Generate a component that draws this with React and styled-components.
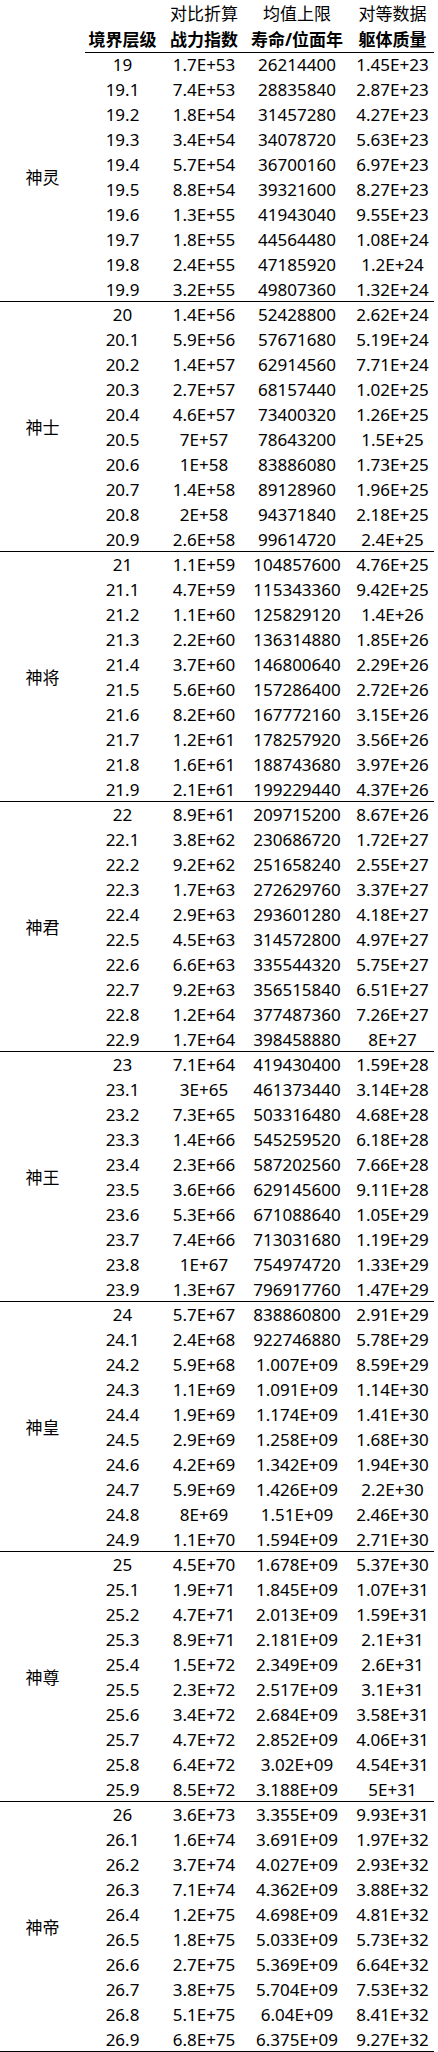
import React from "react";
import styled, { createGlobalStyle } from "styled-components";

const GlobalStyle = createGlobalStyle`
  html, body {
    margin: 0;
    padding: 0;
    background: #fff;
  }
  body {
    font-family: "Noto Sans", "Noto Sans CJK SC", sans-serif;
    color: #000;
    overflow: hidden;
  }
`;

const groups = [
  {
    name: "神灵",
    rows: [
      ["19", "1.7E+53", "26214400", "1.45E+23"],
      ["19.1", "7.4E+53", "28835840", "2.87E+23"],
      ["19.2", "1.8E+54", "31457280", "4.27E+23"],
      ["19.3", "3.4E+54", "34078720", "5.63E+23"],
      ["19.4", "5.7E+54", "36700160", "6.97E+23"],
      ["19.5", "8.8E+54", "39321600", "8.27E+23"],
      ["19.6", "1.3E+55", "41943040", "9.55E+23"],
      ["19.7", "1.8E+55", "44564480", "1.08E+24"],
      ["19.8", "2.4E+55", "47185920", "1.2E+24"],
      ["19.9", "3.2E+55", "49807360", "1.32E+24"],
    ],
  },
  {
    name: "神士",
    rows: [
      ["20", "1.4E+56", "52428800", "2.62E+24"],
      ["20.1", "5.9E+56", "57671680", "5.19E+24"],
      ["20.2", "1.4E+57", "62914560", "7.71E+24"],
      ["20.3", "2.7E+57", "68157440", "1.02E+25"],
      ["20.4", "4.6E+57", "73400320", "1.26E+25"],
      ["20.5", "7E+57", "78643200", "1.5E+25"],
      ["20.6", "1E+58", "83886080", "1.73E+25"],
      ["20.7", "1.4E+58", "89128960", "1.96E+25"],
      ["20.8", "2E+58", "94371840", "2.18E+25"],
      ["20.9", "2.6E+58", "99614720", "2.4E+25"],
    ],
  },
  {
    name: "神将",
    rows: [
      ["21", "1.1E+59", "104857600", "4.76E+25"],
      ["21.1", "4.7E+59", "115343360", "9.42E+25"],
      ["21.2", "1.1E+60", "125829120", "1.4E+26"],
      ["21.3", "2.2E+60", "136314880", "1.85E+26"],
      ["21.4", "3.7E+60", "146800640", "2.29E+26"],
      ["21.5", "5.6E+60", "157286400", "2.72E+26"],
      ["21.6", "8.2E+60", "167772160", "3.15E+26"],
      ["21.7", "1.2E+61", "178257920", "3.56E+26"],
      ["21.8", "1.6E+61", "188743680", "3.97E+26"],
      ["21.9", "2.1E+61", "199229440", "4.37E+26"],
    ],
  },
  {
    name: "神君",
    rows: [
      ["22", "8.9E+61", "209715200", "8.67E+26"],
      ["22.1", "3.8E+62", "230686720", "1.72E+27"],
      ["22.2", "9.2E+62", "251658240", "2.55E+27"],
      ["22.3", "1.7E+63", "272629760", "3.37E+27"],
      ["22.4", "2.9E+63", "293601280", "4.18E+27"],
      ["22.5", "4.5E+63", "314572800", "4.97E+27"],
      ["22.6", "6.6E+63", "335544320", "5.75E+27"],
      ["22.7", "9.2E+63", "356515840", "6.51E+27"],
      ["22.8", "1.2E+64", "377487360", "7.26E+27"],
      ["22.9", "1.7E+64", "398458880", "8E+27"],
    ],
  },
  {
    name: "神王",
    rows: [
      ["23", "7.1E+64", "419430400", "1.59E+28"],
      ["23.1", "3E+65", "461373440", "3.14E+28"],
      ["23.2", "7.3E+65", "503316480", "4.68E+28"],
      ["23.3", "1.4E+66", "545259520", "6.18E+28"],
      ["23.4", "2.3E+66", "587202560", "7.66E+28"],
      ["23.5", "3.6E+66", "629145600", "9.11E+28"],
      ["23.6", "5.3E+66", "671088640", "1.05E+29"],
      ["23.7", "7.4E+66", "713031680", "1.19E+29"],
      ["23.8", "1E+67", "754974720", "1.33E+29"],
      ["23.9", "1.3E+67", "796917760", "1.47E+29"],
    ],
  },
  {
    name: "神皇",
    rows: [
      ["24", "5.7E+67", "838860800", "2.91E+29"],
      ["24.1", "2.4E+68", "922746880", "5.78E+29"],
      ["24.2", "5.9E+68", "1.007E+09", "8.59E+29"],
      ["24.3", "1.1E+69", "1.091E+09", "1.14E+30"],
      ["24.4", "1.9E+69", "1.174E+09", "1.41E+30"],
      ["24.5", "2.9E+69", "1.258E+09", "1.68E+30"],
      ["24.6", "4.2E+69", "1.342E+09", "1.94E+30"],
      ["24.7", "5.9E+69", "1.426E+09", "2.2E+30"],
      ["24.8", "8E+69", "1.51E+09", "2.46E+30"],
      ["24.9", "1.1E+70", "1.594E+09", "2.71E+30"],
    ],
  },
  {
    name: "神尊",
    rows: [
      ["25", "4.5E+70", "1.678E+09", "5.37E+30"],
      ["25.1", "1.9E+71", "1.845E+09", "1.07E+31"],
      ["25.2", "4.7E+71", "2.013E+09", "1.59E+31"],
      ["25.3", "8.9E+71", "2.181E+09", "2.1E+31"],
      ["25.4", "1.5E+72", "2.349E+09", "2.6E+31"],
      ["25.5", "2.3E+72", "2.517E+09", "3.1E+31"],
      ["25.6", "3.4E+72", "2.684E+09", "3.58E+31"],
      ["25.7", "4.7E+72", "2.852E+09", "4.06E+31"],
      ["25.8", "6.4E+72", "3.02E+09", "4.54E+31"],
      ["25.9", "8.5E+72", "3.188E+09", "5E+31"],
    ],
  },
  {
    name: "神帝",
    rows: [
      ["26", "3.6E+73", "3.355E+09", "9.93E+31"],
      ["26.1", "1.6E+74", "3.691E+09", "1.97E+32"],
      ["26.2", "3.7E+74", "4.027E+09", "2.93E+32"],
      ["26.3", "7.1E+74", "4.362E+09", "3.88E+32"],
      ["26.4", "1.2E+75", "4.698E+09", "4.81E+32"],
      ["26.5", "1.8E+75", "5.033E+09", "5.73E+32"],
      ["26.6", "2.7E+75", "5.369E+09", "6.64E+32"],
      ["26.7", "3.8E+75", "5.704E+09", "7.53E+32"],
      ["26.8", "5.1E+75", "6.04E+09", "8.41E+32"],
      ["26.9", "6.8E+75", "6.375E+09", "9.27E+32"],
    ],
  },
];

// column widths shared by the header and every group
const COLS = "85px 75px 88px 98px 88px";

const Sheet = styled.div`
  width: 434px;
  font-size: 17px;
  white-space: nowrap;
`;

const HeadRow = styled.div`
  display: grid;
  grid-template-columns: ${COLS};
  height: ${(p) => (p.$top ? "26px" : "26px")};
`;

const HeadCell = styled.div`
  box-sizing: border-box;
  display: flex;
  align-items: center;
  justify-content: center;
  padding-left: ${(p) => p.$shift || 0}px;
  padding-bottom: ${(p) => (p.$top ? "2px" : "1px")};
  font-weight: ${(p) => (p.$top ? 400 : 700)};
  border-bottom: ${(p) => (p.$line ? "1px solid #000" : "none")};
`;

const Group = styled.div`
  box-sizing: border-box;
  display: grid;
  grid-template-columns: ${COLS};
  grid-template-rows: repeat(10, 1fr);
  height: 250px;
  border-bottom: 1px solid #000;
`;

const GroupName = styled.div`
  grid-row: 1 / -1;
  grid-column: 1;
  display: flex;
  align-items: center;
  justify-content: center;
  padding-bottom: 2px;
`;

const Cell = styled.div`
  display: flex;
  align-items: center;
  justify-content: center;
  line-height: 25px;
  padding-left: ${(p) => p.$shift || 0}px;
`;

export default function App() {
  return (
    <>
      <GlobalStyle />
      <Sheet>
        <HeadRow $top>
          <HeadCell $top />
          <HeadCell $top />
          <HeadCell $top>对比折算</HeadCell>
          <HeadCell $top>均值上限</HeadCell>
          <HeadCell $top $shift={5}>对等数据</HeadCell>
        </HeadRow>
        <HeadRow>
          <HeadCell />
          <HeadCell $line>境界层级</HeadCell>
          <HeadCell $line>战力指数</HeadCell>
          <HeadCell $line>寿命/位面年</HeadCell>
          <HeadCell $line $shift={5}>躯体质量</HeadCell>
        </HeadRow>
        {groups.map((g) => (
          <Group key={g.name}>
            <GroupName>{g.name}</GroupName>
            {g.rows.map((r) =>
              r.map((v, j) => (
                <Cell key={r[0] + "-" + j} $shift={j === 3 ? 5 : 0}>
                  {v}
                </Cell>
              ))
            )}
          </Group>
        ))}
      </Sheet>
    </>
  );
}
